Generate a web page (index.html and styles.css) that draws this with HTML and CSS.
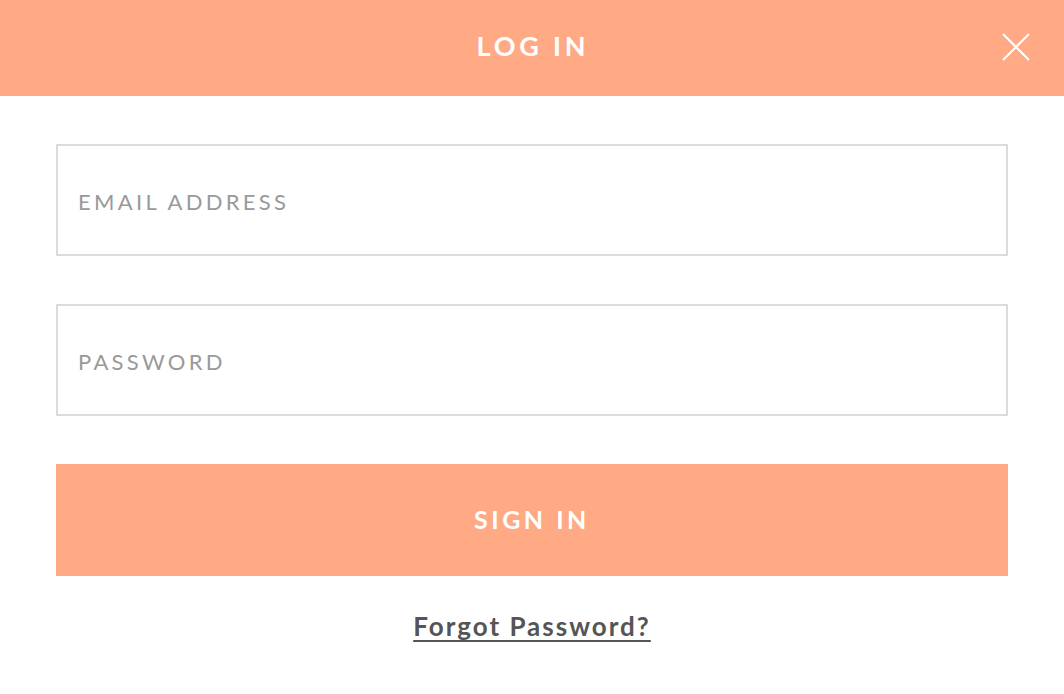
FILE: index.html
```html
<!DOCTYPE html>
<html>
<head>
<meta charset="utf-8">
<link rel="stylesheet" href="styles.css">
</head>
<body>
<div class="modal">
  <header class="header">
    <h1 class="title">LOG IN</h1>
    <button class="close" aria-label="Close">
      <svg width="28" height="28" viewBox="0 0 28 28"><path d="M1 1L27 27M27 1L1 27" stroke="#fff" stroke-width="2.2" fill="none"/></svg>
    </button>
  </header>
  <form class="form">
    <div class="field"><span class="placeholder">EMAIL ADDRESS</span></div>
    <div class="field"><span class="placeholder">PASSWORD</span></div>
    <div class="submit">SIGN IN</div>
    <a class="forgot" href="#">Forgot Password?</a>
  </form>
</div>
</body>
</html>
```
FILE: styles.css
```css
html, body {
  margin: 0;
  padding: 0;
  background: #fff;
  font-family: "Lato", "Liberation Sans", sans-serif;
}
.modal {
  width: 1064px;
  height: 694px;
}
.header {
  position: relative;
  height: 96px;
  background: #ffa985;
  display: flex;
  align-items: center;
  justify-content: center;
}
.title {
  margin: 0 0 6px;
  color: #fff;
  font-size: 27px;
  font-weight: 700;
  letter-spacing: 3.8px;
  padding-left: 2px;
}
.close {
  position: absolute;
  right: 34px;
  top: 33px;
  width: 28px;
  height: 28px;
  padding: 0;
  border: 0;
  background: none;
  display: block;
}
.close svg { display: block; }
.form {
  padding: 48px 56px 0;
  display: flex;
  flex-direction: column;
}
.field {
  height: 108px;
  border: 2px solid #dcdcdc;
  display: flex;
  align-items: center;
  padding-left: 20px;
  margin-bottom: 48px;
}
.placeholder {
  color: #999;
  font-size: 22px;
  letter-spacing: 3.3px;
  margin-top: 2px;
}
.submit {
  height: 112px;
  box-sizing: border-box;
  padding-bottom: 3px;
  background: #ffa985;
  color: #fff;
  font-size: 25px;
  font-weight: 700;
  letter-spacing: 3.5px;
  display: flex;
  align-items: center;
  justify-content: center;
  margin-bottom: 34px;
}
.forgot {
  align-self: center;
  color: #555;
  font-size: 26px;
  font-weight: 700;
  letter-spacing: 2px;
  text-decoration: underline;
  text-decoration-thickness: 2px;
  text-decoration-skip-ink: none;
  text-underline-offset: 4px;
}
```
